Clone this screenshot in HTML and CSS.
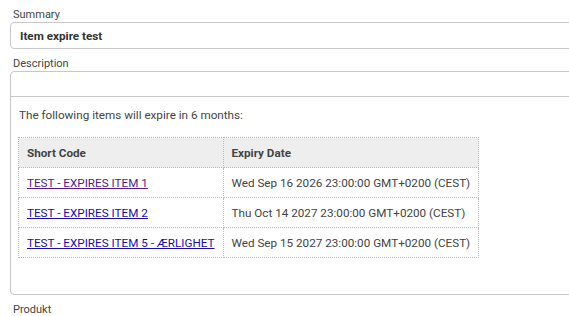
FILE: index.html
```html
<!DOCTYPE html>
<html lang="en">
<head>
    <meta charset="UTF-8">
    <meta name="viewport" content="width=device-width, initial-scale=1.0">
    <title>Item expire test</title>
    <link rel="stylesheet" href="styles.css">
</head>
<body>
    <div class="form">
        <div class="field">
            <label class="field-label">Summary</label>
            <div class="input">Item expire test</div>
        </div>

        <div class="field">
            <label class="field-label">Description</label>
            <div class="editor">
                <div class="toolbar"></div>
                <div class="editor-body">
                    <p>The following items will expire in 6 months:</p>
                    <table class="items">
                        <tr>
                            <th class="code-col">Short Code</th>
                            <th>Expiry Date</th>
                        </tr>
                        <tr>
                            <td><a href="#" class="visited">TEST - EXPIRES ITEM 1</a></td>
                            <td>Wed Sep 16 2026 23:00:00 GMT+0200 (CEST)</td>
                        </tr>
                        <tr>
                            <td><a href="#">TEST - EXPIRES ITEM 2</a></td>
                            <td>Thu Oct 14 2027 23:00:00 GMT+0200 (CEST)</td>
                        </tr>
                        <tr>
                            <td><a href="#">TEST - EXPIRES ITEM 5 - ÆRLIGHET</a></td>
                            <td>Wed Sep 15 2027 23:00:00 GMT+0200 (CEST)</td>
                        </tr>
                    </table>
                </div>
            </div>
        </div>

        <div class="field">
            <label class="field-label">Produkt</label>
        </div>
    </div>
</body>
</html>
```

FILE: styles.css
```css
html, body {
    overflow: hidden;
}
body {
    font-family: Roboto, Arial, sans-serif;
    margin: 0;
    padding: 0;
    background: #fff;
    color: #333;
}
.form {
    width: 600px;
    padding: 8px 0 0 10px;
}
.field {
    margin-bottom: 8px;
}
.field-label {
    display: block;
    font-size: 11px;
    line-height: 14px;
    color: #444;
    padding-left: 3px;
}
.input {
    height: 25px;
    border: 1px solid #c8c8c8;
    border-radius: 4px;
    padding: 0 9px;
    font-size: 11.7px;
    font-weight: bold;
    line-height: 26px;
    color: #333;
}
.editor {
    height: 222px;
    border: 1px solid #c8c8c8;
    border-radius: 4px;
}
.toolbar {
    height: 24px;
    border-bottom: 1px solid #c8c8c8;
}
.editor-body {
    padding: 11px 7px;
}
.editor-body p {
    margin: 0 0 14px 1px;
    font-size: 11.7px;
    line-height: 15px;
    color: #444;
}
.items {
    border-collapse: collapse;
    font-size: 11.7px;
    color: #444;
}
.items th, .items td {
    border: 1px dotted #bbb;
    height: 29px;
    padding: 0 8px;
    text-align: left;
    white-space: nowrap;
}
.items th {
    background: #eee;
    font-weight: bold;
    color: #444;
}
.code-col {
    width: 184px;
}
.items a {
    color: #1a0dab;
}
.items a.visited {
    color: #551a8b;
}
```
